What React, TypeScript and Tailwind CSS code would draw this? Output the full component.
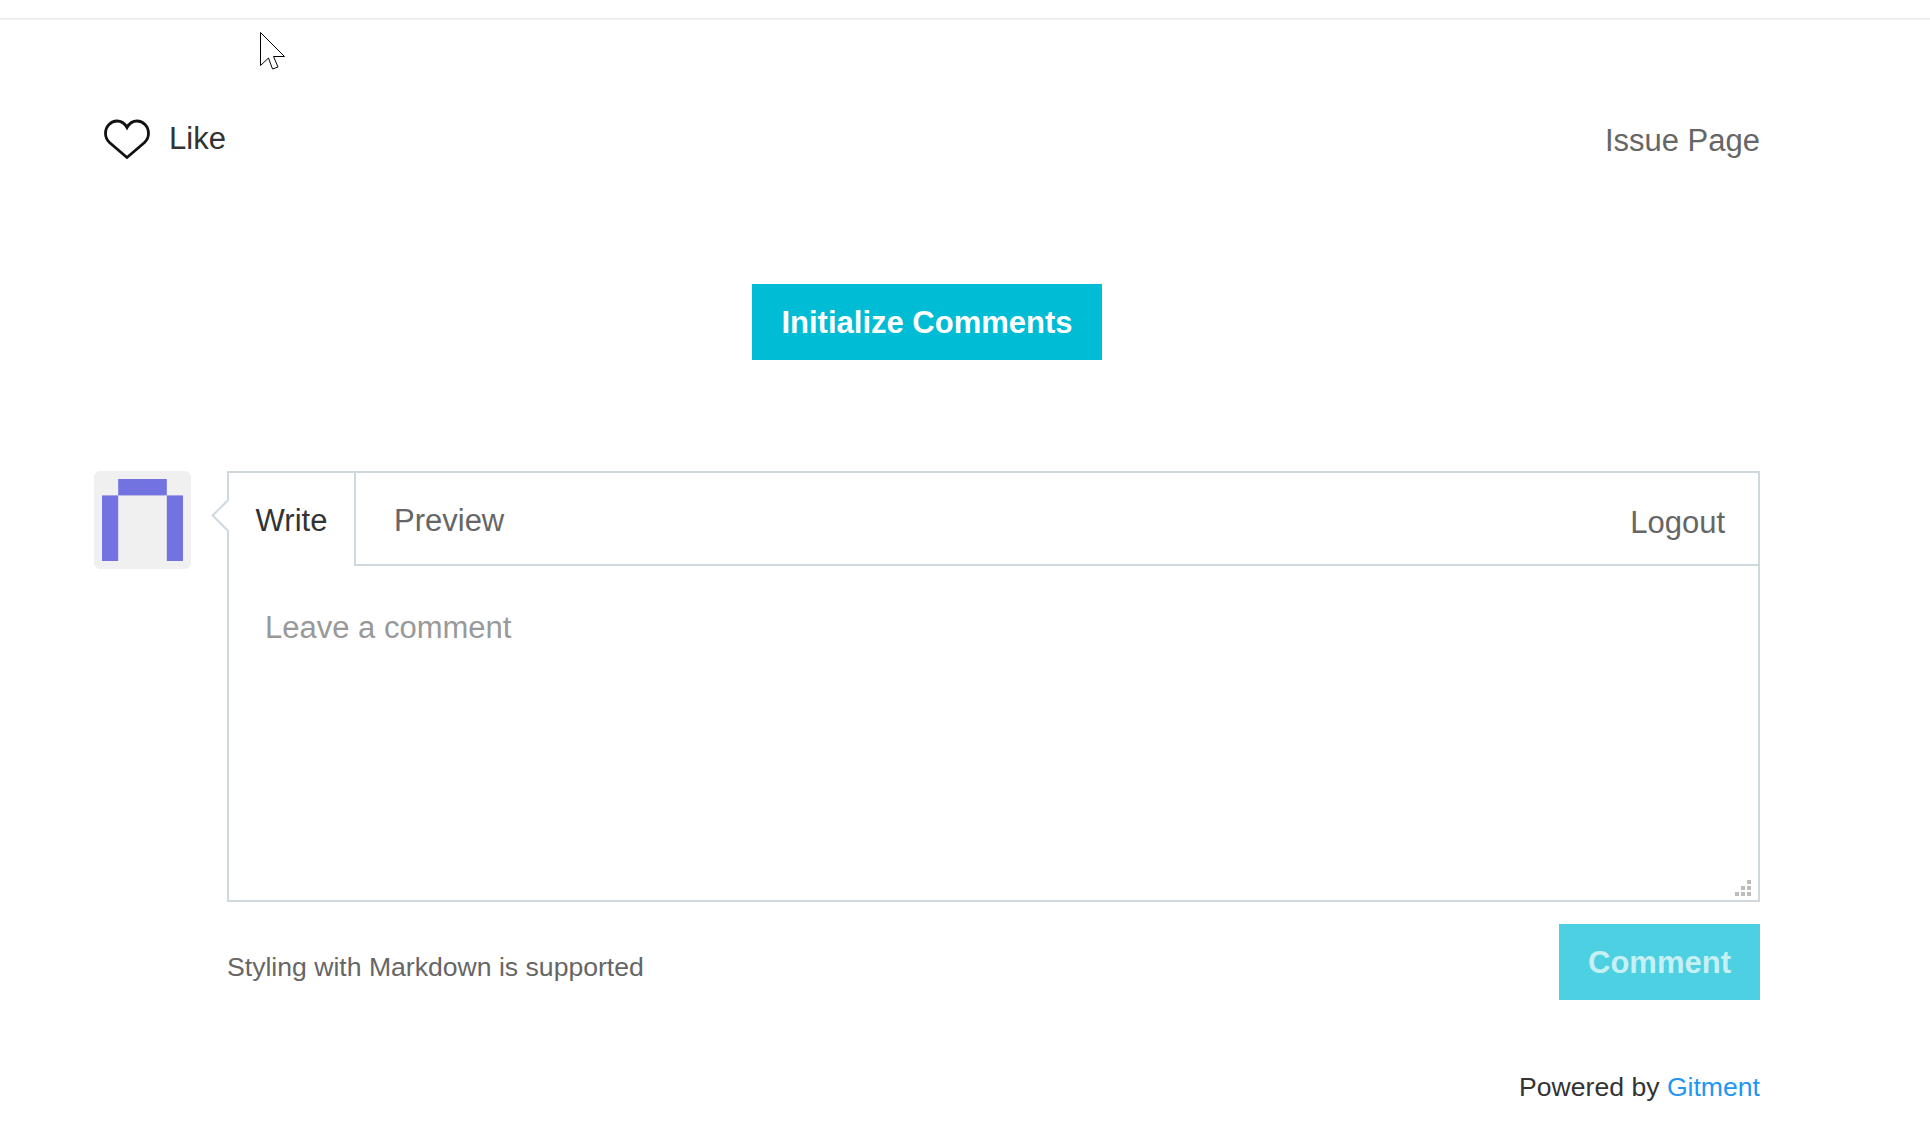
const sans = { fontFamily: '"Liberation Sans", Arial, sans-serif' };

function Cursor() {
  return (
    <svg className="absolute left-[259px] top-[31px]" width="28" height="40" viewBox="0 0 28 40">
      <path
        d="M1.5 1.5V34.5L9.5 27L13.5 38L19 36L14.5 25.5H25.5Z"
        fill="#fff"
        stroke="#000"
        strokeWidth="1"
      />
    </svg>
  );
}

function Heart() {
  return (
    <svg width="47" height="41" viewBox="0 0 47 41" fill="none" stroke="#111" strokeWidth="2.8">
      <path d="M23 38.5L5.5 23.5C2.5 20.5 1.5 18 1.5 14.5C1.5 7 7 2 13 2C17 2 20.5 4 23 8.5C25.5 4 29 2 33 2C39 2 44.5 7 44.5 14.5C44.5 18 43.5 20.5 40.5 23.5Z" />
    </svg>
  );
}

function Avatar() {
  return (
    <div className="h-[98px] w-[97px] shrink-0 rounded-[6px] bg-[#f0f0f0] p-2">
      <svg width="81" height="82" viewBox="0 0 5 5" preserveAspectRatio="none" fill="#7272e0">
        <rect x="1" y="0" width="3" height="1" />
        <rect x="0" y="1" width="1" height="4" />
        <rect x="4" y="1" width="1" height="4" />
      </svg>
    </div>
  );
}

function ResizeGrip() {
  return (
    <svg className="absolute bottom-[4px] right-[7px]" width="16" height="16" viewBox="0 0 16 16" fill="#bdbdbd">
      <rect x="12" y="0" width="4" height="4" />
      <rect x="6" y="6" width="4" height="4" />
      <rect x="12" y="6" width="4" height="4" />
      <rect x="0" y="12" width="4" height="4" />
      <rect x="6" y="12" width="4" height="4" />
      <rect x="12" y="12" width="4" height="4" />
    </svg>
  );
}

export default function App() {
  return (
    <div style={sans} className="relative h-[1126px] overflow-hidden bg-white">
      <div className="mt-[18px] h-[2px] bg-[#eeeeee]" />
      <Cursor />

      <div className="ml-[94px] w-[1666px] pt-[99px]">
        <div className="flex items-start justify-between">
          <button type="button" className="ml-[10px] flex items-center gap-[18px] text-[31px] leading-[41px] text-[#333]">
            <Heart />
            <span className="mt-[-3px]">Like</span>
          </button>
          <a className="mt-[1px] text-[31px] leading-[41px] text-[#666]">Issue Page</a>
        </div>

        <div className="mt-[123px] flex justify-center">
          <button type="button" className="h-[76px] w-[350px] bg-[#00bcd4] pt-[3px] text-[31px] font-bold text-white">
            Initialize Comments
          </button>
        </div>

        <div className="mt-[111px] flex gap-[36px]">
          <Avatar />
          <div className="flex-1">
            <div className="relative border-2 border-[#cfd8dc]">
              <div className="absolute left-[-13px] top-[31px] size-[23px] rotate-45 border-b-2 border-l-2 border-[#cfd8dc] bg-white" />
              <div className="relative flex h-[93px]">
                <div className="flex w-[125px] items-center justify-center bg-white pt-[3px] text-[31px] text-[#333]">Write</div>
                <div className="flex flex-1 items-center justify-between border-b-2 border-l-2 border-[#cfd8dc] pl-[38px] pr-[33px] text-[31px] text-[#666]">
                  <span className="pt-[5px]">Preview</span>
                  <span className="pt-[10px]">Logout</span>
                </div>
              </div>
              <div className="relative h-[334px]">
                <textarea
                  placeholder="Leave a comment"
                  className="size-full resize-none bg-white px-[36px] py-[42px] text-[31px] leading-[40px] outline-none placeholder:text-[#999]"
                />
                <ResizeGrip />
              </div>
            </div>

            <div className="mt-[22px] flex items-start justify-between">
              <span className="mt-[25px] text-[26.6px] leading-[37px] text-[#666]">Styling with Markdown is supported</span>
              <button type="button" className="h-[76px] w-[201px] bg-[#4dd0e1] pt-[3px] text-[31px] font-bold text-white/70">
                Comment
              </button>
            </div>

            <div className="mt-[69px] text-right text-[26.6px] leading-[37px] text-[#333]">
              Powered by <a className="text-[#2196f3]">Gitment</a>
            </div>
          </div>
        </div>
      </div>
    </div>
  );
}
